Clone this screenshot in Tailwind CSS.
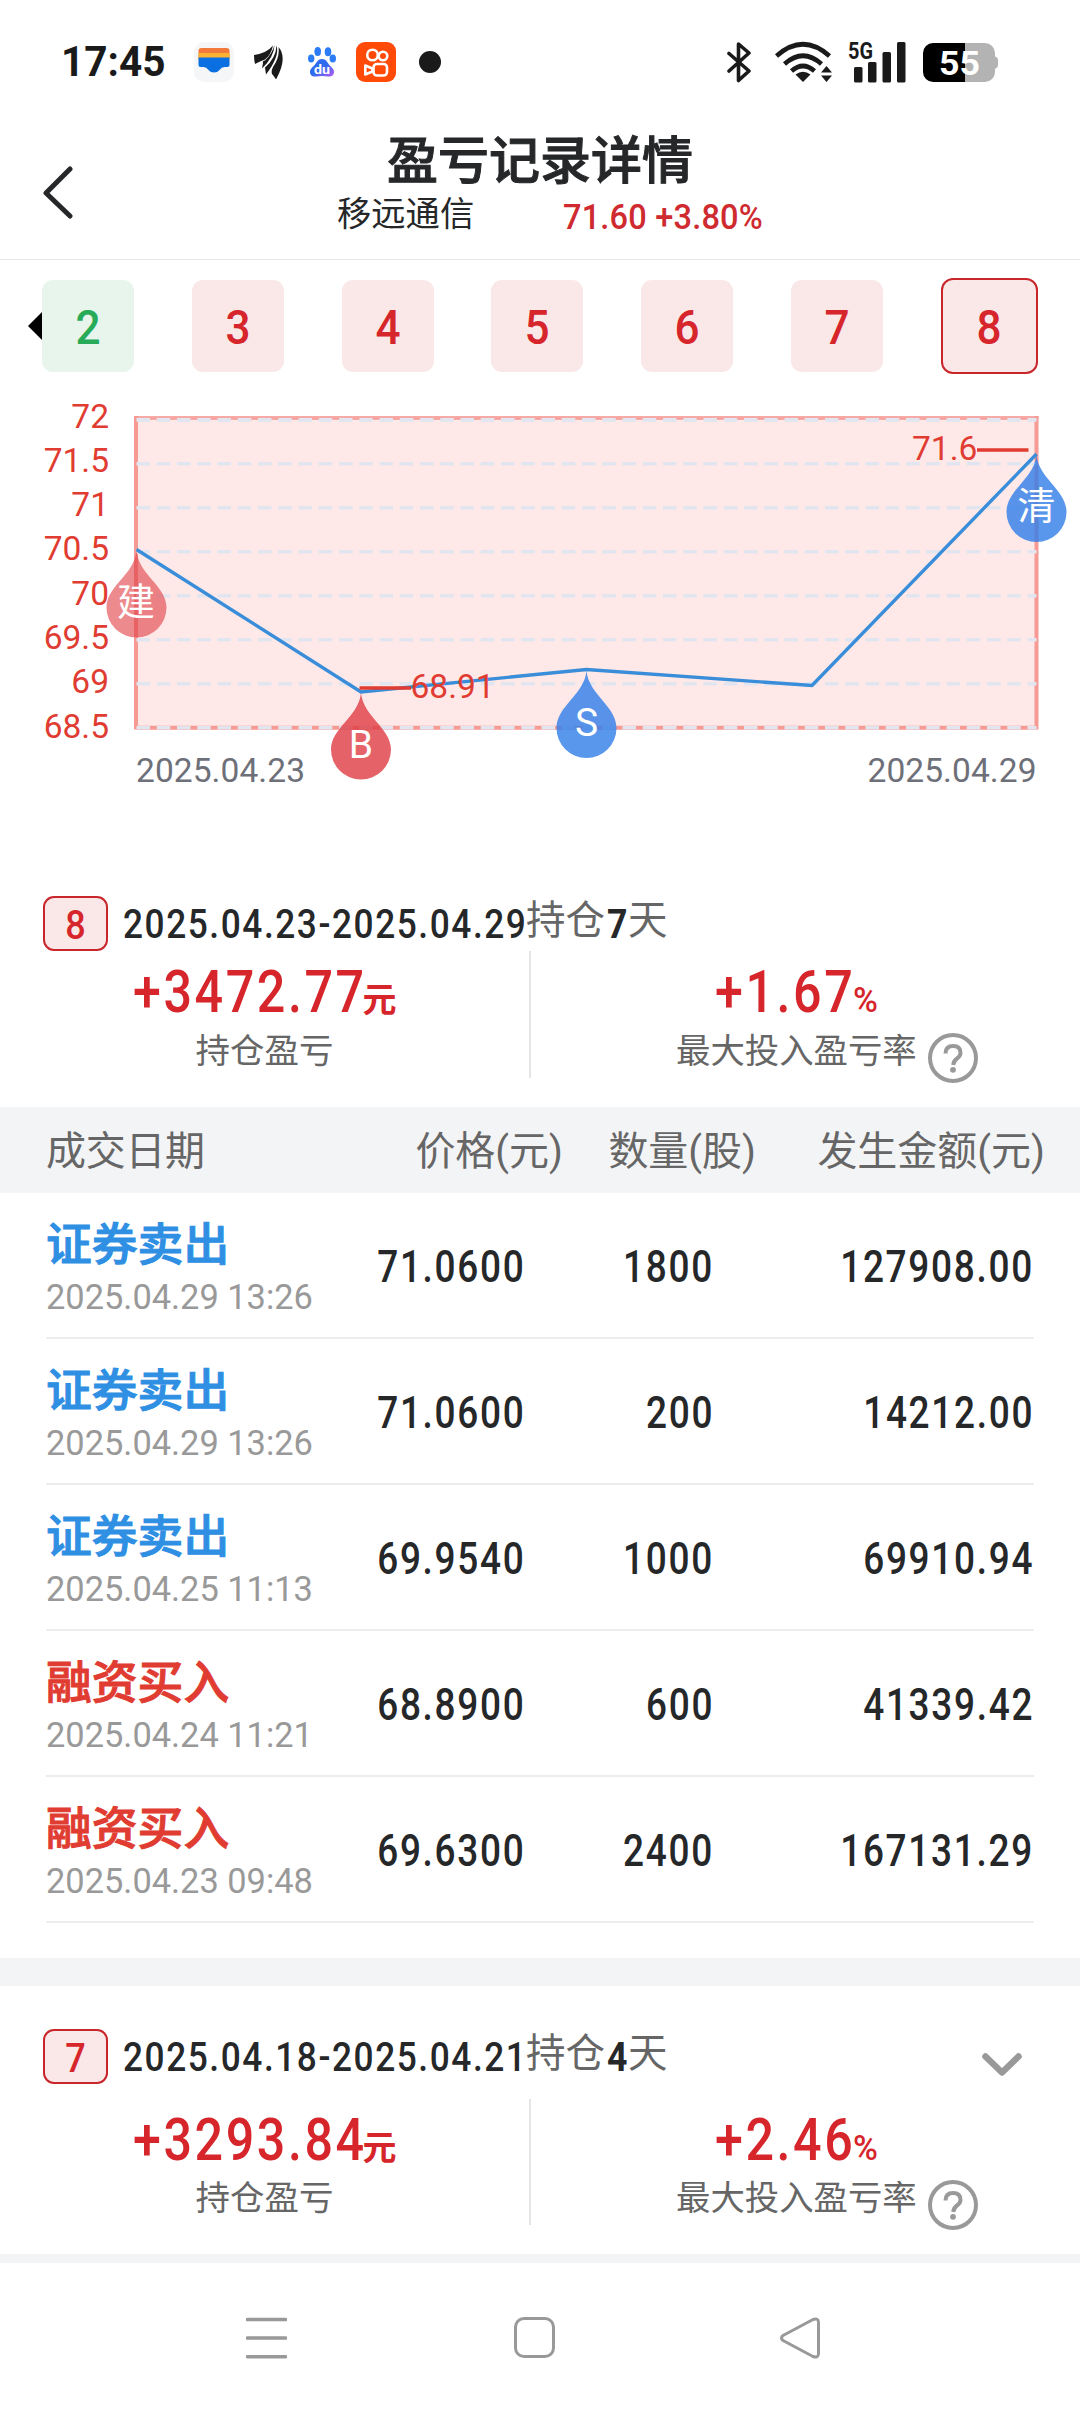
<!DOCTYPE html>
<html lang="zh-CN">
<head>
<meta charset="utf-8">
<title>盈亏记录详情</title>
<script src="https://cdn.jsdelivr.net/npm/@tailwindcss/browser@4"></script>
</head>
<body class="bg-white">
<div class="w-[1080px] h-[2412px] flex flex-col overflow-hidden bg-white font-[Roboto,'Noto_Sans_CJK_SC',sans-serif] text-[#252729] leading-none">

  <!-- Status bar -->
  <div class="h-[124px] shrink-0 flex items-center justify-between pl-[61px] pr-[81px]">
    <div class="flex items-center">
      <div class="w-[133px] whitespace-nowrap"><span class="inline-block origin-left scale-x-[0.965] text-[42px] font-bold text-[#1a1a1a]">17:45</span></div>
      <svg class="w-[40px] h-[40px]" viewBox="0 0 40 40">
        <rect width="40" height="40" rx="10" fill="#f5f6f7"/>
        <path d="M4.500 16V9q0-3 3-3h25q3 0 3 3v7z" fill="#f0793b"/>
        <path d="M4.500 11h31v7h-31z" fill="#f9b233"/>
        <path d="M4.500 15.500h31V23q0 2-2 2h-3q-3 0-5 3-2 2.500-5.500 2.500T14.500 28q-2-3-5-3h-3q-2 0-2-2z" fill="#0a6fe0"/>
      </svg>
      <svg class="ml-[20px] w-[29px] h-[34px]" viewBox="0 0 29 34" fill="#1a1a1a">
        <path d="M0 10Q13 8 19 0.500 17 10 11 14.500 6 16 1 19 0 15 0 10z"/>
        <path d="M20.500 0Q20 12 8 23.500L9 18Q8 16 11 15.500 18 9 20.500 0z"/>
        <path d="M22.500 0.500Q26 11 12 29.500L11 22.500Q22 13 22.500 0.500z"/>
        <path d="M24.500 2Q34 13 22 34.500 20 31 18 29 17 26 19 22 26 12 24.500 2z"/>
      </svg>
      <svg class="ml-[25px] w-[28px] h-[30px]" viewBox="0 0 28 30">
        <defs><linearGradient id="paw" x1="0" y1="0" x2="1" y2="1"><stop offset="0.5" stop-color="#2f6bf0"/><stop offset="1" stop-color="#b65cf5"/></linearGradient></defs>
        <ellipse cx="9.700" cy="4.500" rx="3.300" ry="4.500" fill="#2a7bf5"/><ellipse cx="20" cy="4.800" rx="3.300" ry="4.500" fill="#2a7bf5"/>
        <ellipse cx="3.200" cy="11.500" rx="3.200" ry="4" fill="#2a7bf5"/><ellipse cx="24.800" cy="11.500" rx="3.200" ry="4" fill="#2a7bf5"/>
        <path d="M14 12c4 0 5 3 7 5.500s5 4 5 7.500-3 5-6 4.500q-6-1-12 0c-3 .5-6-1-6-4.500s3-5 5-7.500 3-5.500 7-5.500z" fill="url(#paw)"/>
        <text x="6" y="26.500" textLength="16" lengthAdjust="spacingAndGlyphs" class="text-[13px] font-bold fill-white">du</text>
      </svg>
      <svg class="ml-[20px] w-[40px] h-[40px]" viewBox="0 0 40 40">
        <rect width="40" height="40" rx="9" fill="#ff4a08"/>
        <g fill="none" stroke="#fff" stroke-width="2.600" stroke-linejoin="round">
          <circle cx="16.500" cy="13" r="5.300"/><circle cx="27" cy="14" r="4.300"/>
          <rect x="17.500" y="22" width="13.500" height="11.500" rx="3.500"/><path d="M9.300 23.500v9l7-3v-3z"/>
        </g>
      </svg>
      <div class="ml-[23px] size-[22px] rounded-full bg-[#1a1a1a]"></div>
    </div>
    <div class="flex items-center">
      <svg class="w-[24px] h-[42px]" viewBox="0 0 24 42" fill="none" stroke="#1a1a1a" stroke-width="3.600" stroke-linejoin="round" stroke-linecap="round"><path d="M2 12.500l20 17.500-10.500 9.500V3L22 12 2 30"/></svg>
      <svg class="ml-[24px] w-[58px] h-[42px]" viewBox="0 0 58 42">
        <g fill="none" stroke="#1a1a1a" stroke-width="4.600">
          <path d="M1.500 15Q28 -8.500 54.500 15"/><path d="M9.500 23Q28 6.500 46.500 23"/><path d="M16.500 30Q28 20 39.500 30"/>
        </g>
        <path d="M28 41l-7.500-7.500q7.500-5.500 15 0z" fill="#1a1a1a"/>
        <path d="M51.500 25l5.500 6.500h-11zM51.500 41l5.500-6.500h-11z" fill="#1a1a1a"/>
      </svg>
      <svg class="ml-[15px] w-[58px] h-[42px] overflow-visible" viewBox="0 0 58 42" fill="#1a1a1a">
        <text x="0" y="18" textLength="25" lengthAdjust="spacingAndGlyphs" class="text-[24.5px] font-bold">5G</text>
        <rect x="6" y="26" width="8.500" height="15.500" rx="1.500"/><rect x="20" y="21" width="8.500" height="20.500" rx="1.500"/><rect x="34.500" y="11" width="8.500" height="30.500" rx="1.500"/><rect x="49" y="1" width="8.500" height="40.500" rx="1.500"/>
      </svg>
      <svg class="ml-[17px] w-[76px] h-[40px]" viewBox="0 0 76 40">
        <defs><clipPath id="battery"><rect y="1" width="72" height="39" rx="10"/></clipPath></defs>
        <g clip-path="url(#battery)"><rect width="42" height="40" fill="#000"/><rect x="42" width="34" height="40" fill="#b3b3b3"/></g>
        <path d="M71 14q4 1 4 4v5q0 3-4 4z" fill="#b3b3b3"/>
        <text x="16" y="32.500" textLength="41" lengthAdjust="spacingAndGlyphs" class="text-[34px] font-bold fill-white">55</text>
      </svg>
    </div>
  </div>

  <!-- Title bar -->
  <header class="h-[136px] shrink-0 border-b border-[#e6e6e6] flex">
    <div class="w-[100px] pt-[41px] pl-[42px]">
      <svg class="w-[32px] h-[54px]" viewBox="0 0 32 54" fill="none" stroke="#252729" stroke-width="5" stroke-linecap="round" stroke-linejoin="round"><path d="M28 4L4 28l24 23"/></svg>
    </div>
    <div class="w-[880px] flex flex-col">
      <h1 class="pt-[12px] text-[51px] font-medium text-center [-webkit-text-stroke:1px]">盈亏记录详情</h1>
      <div class="flex items-start pt-[10px] pl-[237px] whitespace-nowrap">
        <span class="w-[226px] text-[34.300px]">移远通信</span>
        <span class="inline-block mt-[3px] origin-left scale-x-[0.93] text-[35px] font-medium text-[#cf2a2f] tracking-[0.200px]">71.60 +3.80%</span>
      </div>
    </div>
  </header>

  <!-- Record tabs -->
  <nav class="h-[130px] shrink-0 flex items-start pt-[18px] pl-[28px] text-[49px] font-medium text-[#d6252b]">
    <div class="w-[14px] h-[96px] flex items-center"><svg class="w-[14px] h-[28px]" viewBox="0 0 14 28"><path d="M14 0v28L0 14z"/></svg></div>
    <div class="flex items-center gap-[57.800px] whitespace-nowrap">
      <div class="w-[92px] h-[92px] rounded-[11px] bg-[#e8f5ec] text-[#27ab58] flex items-center justify-center"><span class="pt-[3px] scale-x-[0.9]">2</span></div>
      <div class="w-[92px] h-[92px] rounded-[11px] bg-[#fae8e8] flex items-center justify-center"><span class="pt-[3px] scale-x-[0.9]">3</span></div>
      <div class="w-[92px] h-[92px] rounded-[11px] bg-[#fae8e8] flex items-center justify-center"><span class="pt-[3px] scale-x-[0.9]">4</span></div>
      <div class="w-[92px] h-[92px] rounded-[11px] bg-[#fae8e8] flex items-center justify-center"><span class="pt-[3px] scale-x-[0.9]">5</span></div>
      <div class="w-[92px] h-[92px] rounded-[11px] bg-[#fae8e8] flex items-center justify-center"><span class="pt-[3px] scale-x-[0.9]">6</span></div>
      <div class="w-[92px] h-[92px] rounded-[11px] bg-[#fae8e8] flex items-center justify-center"><span class="pt-[3px] scale-x-[0.9]">7</span></div>
      <div class="w-[97px] h-[96px] rounded-[12px] border-2 border-[#c9262c] bg-[#fae8e8] flex items-center justify-center"><span class="pt-[3px] scale-x-[0.9]">8</span></div>
    </div>
  </nav>

  <!-- Price chart -->
  <svg class="w-[1080px] h-[490px] shrink-0 text-[33.500px]" viewBox="0 390 1080 490">
    <rect x="136" y="418" width="900.500" height="310" fill="#fee9e8"/>
    <path d="M134 417.500H1038.500" stroke="#f6a9a5" stroke-width="3"/>
    <path d="M136.500 419H1036.500" stroke="#f69a94" stroke-width="1.500"/>
    <path d="M136 416V729.500M1036.500 416V729.500M136 727.700H1036.500" stroke="#f69a94" stroke-width="4"/>
    <path d="M136.500 419.900H1036.500M136.500 463.700H1036.500M136.500 507.700H1036.500M136.500 551.700H1036.500M136.500 595.700H1036.500M136.500 639.700H1036.500M136.500 683.700H1036.500M136.500 727.700H1036.500" stroke="#e0e5f0" stroke-width="3.600" stroke-dasharray="13.500 6.750"/>
    <g fill="#e03c32" text-anchor="end">
      <text x="109" y="428">72</text><text x="109" y="472">71.5</text><text x="109" y="516">71</text><text x="109" y="560.300">70.5</text><text x="109" y="605.300">70</text><text x="109" y="649">69.5</text><text x="109" y="693.300">69</text><text x="109" y="737.500">68.5</text>
    </g>
    <path d="M136.500 549.500L361 692 586.500 669.500 812 685.500 1036.500 454" fill="none" stroke="#3a8dd9" stroke-width="3.400"/>
    <g fill="#e03c32">
      <path d="M359.500 688H411M977 450H1028.500" stroke="#e03c32" stroke-width="3.600"/>
      <text x="410.500" y="697.700">68.91</text><text x="912" y="460">71.6</text>
    </g>
    <g text-anchor="middle">
      <path d="M136.500 551C139 575 166.500 586 166.500 607.500A30 30 0 0 1 106.500 607.500C106.500 586 134 575 136.500 551z" fill="#df3c42" fill-opacity="0.600"/>
      <text x="136" y="615" class="text-[38px] fill-white">建</text>
      <path d="M361 693C363.500 717 391 728 391 749.500A30 30 0 0 1 331 749.500C331 728 358.500 717 361 693z" fill="#df3c42" fill-opacity="0.800"/>
      <text x="361" y="757.500" class="text-[39px] fill-white">B</text>
      <path d="M586.500 671C589 695 616.500 706 616.500 728A30 30 0 0 1 556.500 728C556.500 706 584 695 586.500 671z" fill="#2f7de9" fill-opacity="0.800"/>
      <text x="586.500" y="735.500" class="text-[39px] fill-white">S</text>
      <path d="M1036.500 455C1039 479 1066.500 490 1066.500 512A30 30 0 0 1 1006.500 512C1006.500 490 1034 479 1036.500 455z" fill="#2f7de9" fill-opacity="0.800"/>
      <text x="1036.500" y="518.500" class="text-[38px] fill-white">清</text>
    </g>
    <g fill="#6e7079"><text x="136" y="781.700" textLength="169">2025.04.23</text><text x="867.500" y="781.700" textLength="169">2025.04.29</text></g>
  </svg>

  <!-- Record 8 summary -->
  <section class="h-[227px] shrink-0 flex flex-col pt-[16px]">
    <div class="h-[55px] shrink-0 flex items-center pl-[43px] whitespace-nowrap">
      <div class="w-[65px] h-[55px] rounded-[11px] border-2 border-[#c9262c] bg-[#fae8e8] flex items-center justify-center"><span class="pt-[5px] scale-x-[0.9] text-[40px] font-medium text-[#d6252b]">8</span></div>
      <div class="ml-[15px] w-[403px] pt-[1px]"><span class="inline-block origin-left scale-x-[0.870] text-[40.500px] font-medium tracking-[1.800px]">2025.04.23-2025.04.29</span></div>
      <span class="-mt-[6px] w-[81px] text-[39.500px] text-[#666]">持仓</span>
      <span class="pt-[1px] w-[21px]"><span class="inline-block origin-left scale-x-[0.88] text-[40.500px] font-bold">7</span></span>
      <span class="-mt-[6px] text-[39.500px] text-[#666]">天</span>
    </div>
    <div class="h-[127px] flex">
      <div class="w-[531px] h-[127px] border-r-2 border-[#e5e5e5] flex flex-col items-center">
        <div class="w-[264px] pt-[11px] flex items-baseline whitespace-nowrap font-medium text-[#d6252b]"><span class="w-[230px]"><span class="inline-block origin-left scale-x-[0.852] text-[59px] tracking-[3px]">+3472.77</span></span><span class="-mt-[2px] text-[34px] font-bold">元</span></div>
        <div class="pt-[13px] text-[34.500px] text-[#666]">持仓盈亏</div>
      </div>
      <div class="w-[549px] flex flex-col">
        <div class="pt-[11px] pl-[184px] flex items-baseline whitespace-nowrap font-medium text-[#d6252b]"><span class="w-[138px]"><span class="inline-block origin-left scale-x-[0.852] text-[59px] tracking-[3px]">+1.67</span></span><span class="inline-block origin-left scale-x-[0.98] text-[34.500px]">%</span></div>
        <div class="h-[50px] pl-[145px] flex items-start">
          <span class="pt-[13px] w-[252px] text-[34.400px] text-[#666] whitespace-nowrap">最大投入盈亏率</span>
          <svg class="mt-[12px] size-[50px] shrink-0" viewBox="0 0 50 50" fill="none" stroke="#999" stroke-width="4"><circle cx="25" cy="25" r="23"/><path d="M17.500 20.500q0-7.500 7.500-7.500t7.500 7q0 3-3.500 5.500t-3.800 6.500"/><circle cx="25" cy="36.800" r="2.900" fill="#999" stroke="none"/></svg>
        </div>
      </div>
    </div>
  </section>

  <!-- Trade table -->
  <div class="h-[86px] shrink-0 bg-[#f3f4f6] flex items-center pt-[3px] text-[40px] text-[#666] whitespace-nowrap">
    <span class="w-[370px] pl-[46px] tracking-[-0.300px]">成交日期</span>
    <span class="w-[193px] text-right">价格(元)</span>
    <span class="w-[193px] text-right">数量(股)</span>
    <span class="w-[289px] text-right">发生金额(元)</span>
  </div>
  <div class="shrink-0 flex flex-col px-[46px] whitespace-nowrap text-[43.500px] font-medium">
    <div class="h-[146px] border-b-2 border-[#ededed] flex items-center pt-[5px]">
      <div class="w-[300px] flex flex-col gap-[11px] pt-[3px]"><span class="text-[45.800px] font-medium text-[#2e8fe3] [-webkit-text-stroke:1px]">证券卖出</span><span class="text-[34.400px] font-normal text-[#999]">2025.04.29 13:26</span></div>
      <div class="w-[179px] text-right"><span class="inline-block origin-right scale-x-[0.85] tracking-[2px]">71.0600</span></div>
      <div class="w-[189px] text-right"><span class="inline-block origin-right scale-x-[0.85] tracking-[2px]">1800</span></div>
      <div class="w-[320px] text-right"><span class="inline-block origin-right scale-x-[0.85] tracking-[2px]">127908.00</span></div>
    </div>
    <div class="h-[146px] border-b-2 border-[#ededed] flex items-center pt-[5px]">
      <div class="w-[300px] flex flex-col gap-[11px] pt-[3px]"><span class="text-[45.800px] font-medium text-[#2e8fe3] [-webkit-text-stroke:1px]">证券卖出</span><span class="text-[34.400px] font-normal text-[#999]">2025.04.29 13:26</span></div>
      <div class="w-[179px] text-right"><span class="inline-block origin-right scale-x-[0.85] tracking-[2px]">71.0600</span></div>
      <div class="w-[189px] text-right"><span class="inline-block origin-right scale-x-[0.85] tracking-[2px]">200</span></div>
      <div class="w-[320px] text-right"><span class="inline-block origin-right scale-x-[0.85] tracking-[2px]">14212.00</span></div>
    </div>
    <div class="h-[146px] border-b-2 border-[#ededed] flex items-center pt-[5px]">
      <div class="w-[300px] flex flex-col gap-[11px] pt-[3px]"><span class="text-[45.800px] font-medium text-[#2e8fe3] [-webkit-text-stroke:1px]">证券卖出</span><span class="text-[34.400px] font-normal text-[#999]">2025.04.25 11:13</span></div>
      <div class="w-[179px] text-right"><span class="inline-block origin-right scale-x-[0.85] tracking-[2px]">69.9540</span></div>
      <div class="w-[189px] text-right"><span class="inline-block origin-right scale-x-[0.85] tracking-[2px]">1000</span></div>
      <div class="w-[320px] text-right"><span class="inline-block origin-right scale-x-[0.85] tracking-[2px]">69910.94</span></div>
    </div>
    <div class="h-[146px] border-b-2 border-[#ededed] flex items-center pt-[5px]">
      <div class="w-[300px] flex flex-col gap-[11px] pt-[3px]"><span class="text-[45.800px] font-medium text-[#e03c32] [-webkit-text-stroke:1px]">融资买入</span><span class="text-[34.400px] font-normal text-[#999]">2025.04.24 11:21</span></div>
      <div class="w-[179px] text-right"><span class="inline-block origin-right scale-x-[0.85] tracking-[2px]">68.8900</span></div>
      <div class="w-[189px] text-right"><span class="inline-block origin-right scale-x-[0.85] tracking-[2px]">600</span></div>
      <div class="w-[320px] text-right"><span class="inline-block origin-right scale-x-[0.85] tracking-[2px]">41339.42</span></div>
    </div>
    <div class="h-[146px] border-b-2 border-[#ededed] flex items-center pt-[5px]">
      <div class="w-[300px] flex flex-col gap-[11px] pt-[3px]"><span class="text-[45.800px] font-medium text-[#e03c32] [-webkit-text-stroke:1px]">融资买入</span><span class="text-[34.400px] font-normal text-[#999]">2025.04.23 09:48</span></div>
      <div class="w-[179px] text-right"><span class="inline-block origin-right scale-x-[0.85] tracking-[2px]">69.6300</span></div>
      <div class="w-[189px] text-right"><span class="inline-block origin-right scale-x-[0.85] tracking-[2px]">2400</span></div>
      <div class="w-[320px] text-right"><span class="inline-block origin-right scale-x-[0.85] tracking-[2px]">167131.29</span></div>
    </div>
  </div>
  <div class="mt-[35px] h-[28px] shrink-0 bg-[#f3f4f6]"></div>

  <!-- Record 7 summary -->
  <section class="h-[268px] shrink-0 flex flex-col pt-[43px]">
    <div class="h-[55px] shrink-0 flex items-center pl-[43px] whitespace-nowrap">
      <div class="w-[65px] h-[55px] rounded-[11px] border-2 border-[#c9262c] bg-[#fae8e8] flex items-center justify-center"><span class="pt-[5px] scale-x-[0.9] text-[40px] font-medium text-[#d6252b]">7</span></div>
      <div class="ml-[15px] w-[403px] pt-[1px]"><span class="inline-block origin-left scale-x-[0.870] text-[40.500px] font-medium tracking-[1.800px]">2025.04.18-2025.04.21</span></div>
      <span class="-mt-[6px] w-[81px] text-[39.500px] text-[#666]">持仓</span>
      <span class="pt-[1px] w-[21px]"><span class="inline-block origin-left scale-x-[0.88] text-[40.500px] font-bold">4</span></span>
      <span class="-mt-[6px] w-[353px] text-[39.500px] text-[#666]">天</span>
      <svg class="mt-[16px] w-[42px] h-[26px]" viewBox="0 0 42 26" fill="none" stroke="#999" stroke-width="6.500" stroke-linecap="round" stroke-linejoin="round"><path d="M4.500 4.500L21 20.500 37.500 4.500"/></svg>
    </div>
    <div class="mt-[15px] h-[126px] flex">
      <div class="w-[531px] h-[126px] border-r-2 border-[#e5e5e5] flex flex-col items-center">
        <div class="w-[264px] pt-[11px] flex items-baseline whitespace-nowrap font-medium text-[#d6252b]"><span class="w-[230px]"><span class="inline-block origin-left scale-x-[0.852] text-[59px] tracking-[3px]">+3293.84</span></span><span class="-mt-[2px] text-[34px] font-bold">元</span></div>
        <div class="pt-[12px] text-[34.500px] text-[#666]">持仓盈亏</div>
      </div>
      <div class="w-[549px] flex flex-col">
        <div class="pt-[11px] pl-[184px] flex items-baseline whitespace-nowrap font-medium text-[#d6252b]"><span class="w-[138px]"><span class="inline-block origin-left scale-x-[0.852] text-[59px] tracking-[3px]">+2.46</span></span><span class="inline-block origin-left scale-x-[0.98] text-[34.500px]">%</span></div>
        <div class="h-[50px] pl-[145px] flex items-start">
          <span class="pt-[12px] w-[252px] text-[34.400px] text-[#666] whitespace-nowrap">最大投入盈亏率</span>
          <svg class="mt-[11px] size-[50px] shrink-0" viewBox="0 0 50 50" fill="none" stroke="#999" stroke-width="4"><circle cx="25" cy="25" r="23"/><path d="M17.500 20.500q0-7.500 7.500-7.500t7.500 7q0 3-3.500 5.500t-3.800 6.500"/><circle cx="25" cy="36.800" r="2.900" fill="#999" stroke="none"/></svg>
        </div>
      </div>
    </div>
  </section>
  <div class="h-[9px] shrink-0 bg-[#f3f4f6]"></div>

  <!-- System navigation -->
  <div class="h-[149px] shrink-0 flex items-center pl-[246px]">
    <svg class="w-[41px] h-[42px]" viewBox="0 0 41 42" stroke="#999" stroke-width="3.600" stroke-linecap="round"><path d="M1.500 2.500h38M1.500 21h38M1.500 39.700h38"/></svg>
    <div class="ml-[227px] size-[41px] rounded-[10px] border-3 border-[#999]"></div>
    <svg class="ml-[225px] w-[41px] h-[42px]" viewBox="0 0 41 42" fill="none" stroke="#999" stroke-width="3" stroke-linejoin="round"><path d="M3 18.500L33 2.500q5.500-2 5.500 3v31q0 5-5.500 3L3 23.500q-3-2.500 0-5z"/></svg>
  </div>
</div>
</body>
</html>
